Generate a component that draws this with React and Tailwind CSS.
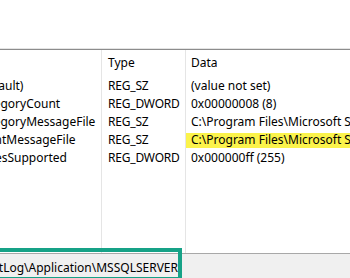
import React from "react";

const rows = [
  { name: "(Default)", type: "REG_SZ", data: "(value not set)" },
  { name: "CategoryCount", type: "REG_DWORD", data: "0x00000008 (8)" },
  {
    name: "CategoryMessageFile",
    type: "REG_SZ",
    data: "C:\\Program Files\\Microsoft SQL Server\\MSSQL15.MSSQLSERVER\\MSSQL\\Binn\\sqlevn70.rll",
  },
  {
    name: "EventMessageFile",
    type: "REG_SZ",
    data: "C:\\Program Files\\Microsoft SQL Server\\MSSQL15.MSSQLSERVER\\MSSQL\\Binn\\sqlevn70.rll",
    marked: true,
  },
  { name: "TypesSupported", type: "REG_DWORD", data: "0x000000ff (255)" },
];

export default function App() {
  return (
    <div
      className="relative w-[350px] h-[278px] overflow-hidden bg-white text-[12px] text-black flex flex-col"
      style={{ fontFamily: '"Segoe UI", "Noto Sans", sans-serif' }}
    >
      {/* blank pane above the list */}
      <div className="h-[48px] shrink-0" />
      <div className="h-[1px] bg-[#e4e4e4] shrink-0" />
      <div className="h-[1px] bg-[#8c8c8c] shrink-0" />

      {/* value list */}
      <div className="flex flex-1 min-h-0">
        {/* Name */}
        <div className="w-[101px] shrink-0 overflow-hidden">
          <div className="h-[27px]" />
          {rows.map((r) => (
            <div key={r.name} className="h-[18px] flex items-center whitespace-nowrap -ml-[25px]">
              {r.name}
            </div>
          ))}
        </div>

        {/* Type */}
        <div className="w-[84px] shrink-0 border-l border-[#e5e5e5] pl-[6px]">
          <div className="h-[26px] flex items-center">Type</div>
          <div className="h-[1px]" />
          {rows.map((r) => (
            <div key={r.name} className="h-[18px] flex items-center whitespace-nowrap tracking-[-0.2px]">
              {r.type}
            </div>
          ))}
        </div>

        {/* Data */}
        <div className="flex-1 min-w-0 border-l border-[#e5e5e5] overflow-hidden">
          <div className="h-[26px] flex items-center pl-[5px]">Data</div>
          <div className="h-[1px]" />
          {rows.map((r) => (
            <div key={r.name} className="h-[18px] flex items-center whitespace-nowrap">
              <div className={`w-full pl-[5px] h-[15px] flex items-center ${r.marked ? "bg-[#fbf34b]" : ""}`}>
                {r.data}
              </div>
            </div>
          ))}
        </div>
      </div>

      {/* status bar */}
      <div className="h-[25px] shrink-0 border-t border-[#a8a8a8] bg-[#f0f0f0] flex items-center pt-[3px]">
        <div className="w-[178px] overflow-hidden flex justify-end whitespace-nowrap text-[12px]">
          Computer\HKEY_LOCAL_MACHINE\SYSTEM\CurrentControlSet\Services\EventLog\Application\MSSQLSERVER
        </div>
      </div>

      {/* teal annotation box */}
      <div className="absolute left-[-4px] top-[248px] w-[186px] h-[33px] border-[4px] border-[#16a287]" />
    </div>
  );
}
